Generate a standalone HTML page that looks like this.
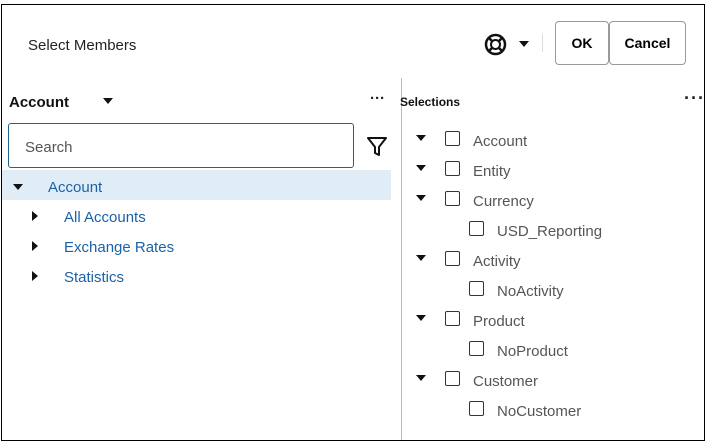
<!DOCTYPE html>
<html><head><style>
body{margin:0;width:707px;height:448px;background:#fff;font-family:"Liberation Sans",sans-serif;position:relative;overflow:hidden}
.a{position:absolute}
.frame{left:1px;top:4px;width:702px;height:435px;border:1.5px solid #000}
.t{font-size:15px;color:#222;white-space:nowrap}
.blue{color:#1a62a8}
.grey{color:#555}
.tri{width:0;height:0;border-left:5px solid transparent;border-right:5px solid transparent;border-top:6px solid #111}
.rtri{width:0;height:0;border-top:5px solid transparent;border-bottom:5px solid transparent;border-left:6px solid #111}
.cb{width:13px;height:13px;border:1.5px solid #333;border-radius:2px}
.btn{border:1px solid #999;border-radius:4px;font-weight:bold;font-size:14px;display:flex;align-items:center;justify-content:center;height:42px;top:21px}
</style></head><body>
<div class="a frame"></div>
<div class="a t" style="left:28px;top:37px;font-size:15px">Select Members</div>
<svg class="a" style="left:484px;top:33px" width="23" height="23" viewBox="0 0 23 23"><circle cx="11.5" cy="11.5" r="9.5" fill="none" stroke="#111" stroke-width="2.5"/><circle cx="11.5" cy="11.5" r="4.5" fill="none" stroke="#111" stroke-width="2"/><path d="M5 5l3.5 3.5M18 5l-3.5 3.5M5 18l3.5-3.5M18 18l-3.5-3.5" stroke="#111" stroke-width="2.5"/></svg>
<div class="a tri" style="left:519px;top:41px"></div>
<div class="a" style="left:542px;top:34px;width:1px;height:18px;background:#ddd"></div>
<div class="a btn" style="left:555px;width:52px">OK</div>
<div class="a btn" style="left:609px;width:75px">Cancel</div>
<div class="a" style="left:401px;top:78px;width:1px;height:362px;background:#bbb"></div>
<div class="a t" style="left:9px;top:94px;font-weight:bold;color:#111">Account</div>
<div class="a tri" style="left:103px;top:98px"></div>
<div class="a t" style="left:370px;top:90px;font-weight:bold">···</div>
<div class="a t" style="left:400px;top:95px;font-size:12px;font-weight:bold;color:#111">Selections</div>
<div class="a t" style="left:684px;top:88px;font-weight:bold;font-size:18px;letter-spacing:1px">···</div>
<div class="a" style="left:8px;top:123px;width:344px;height:43px;border:1.5px solid #1b6686;border-radius:3px"></div>
<div class="a t grey" style="left:25px;top:139px">Search</div>
<svg class="a" style="left:366px;top:136px" width="22" height="22" viewBox="0 0 22 22"><path d="M2 2h18l-7 9v8l-4 -2v-6z" fill="none" stroke="#111" stroke-width="2" stroke-linejoin="round"/></svg>
<div class="a" style="left:2px;top:170px;width:389px;height:30px;background:#e0edf7"></div>
<div class="a tri" style="left:13px;top:184px"></div>
<div class="a t blue" style="left:48px;top:179px">Account</div>
<div class="a rtri" style="left:32px;top:211px"></div><div class="a t blue" style="left:64px;top:209px">All Accounts</div>
<div class="a rtri" style="left:32px;top:241px"></div><div class="a t blue" style="left:64px;top:239px">Exchange Rates</div>
<div class="a rtri" style="left:32px;top:271px"></div><div class="a t blue" style="left:64px;top:269px">Statistics</div>

<div class="a tri" style="left:416px;top:135px"></div><div class="a cb" style="left:445px;top:131px"></div><div class="a t grey" style="left:473px;top:133px">Account</div>
<div class="a tri" style="left:416px;top:165px"></div><div class="a cb" style="left:445px;top:161px"></div><div class="a t grey" style="left:473px;top:163px">Entity</div>
<div class="a tri" style="left:416px;top:195px"></div><div class="a cb" style="left:445px;top:191px"></div><div class="a t grey" style="left:473px;top:193px">Currency</div>
<div class="a cb" style="left:469px;top:221px"></div><div class="a t grey" style="left:497px;top:223px">USD_Reporting</div>
<div class="a tri" style="left:416px;top:255px"></div><div class="a cb" style="left:445px;top:251px"></div><div class="a t grey" style="left:473px;top:253px">Activity</div>
<div class="a cb" style="left:469px;top:281px"></div><div class="a t grey" style="left:497px;top:283px">NoActivity</div>
<div class="a tri" style="left:416px;top:315px"></div><div class="a cb" style="left:445px;top:311px"></div><div class="a t grey" style="left:473px;top:313px">Product</div>
<div class="a cb" style="left:469px;top:341px"></div><div class="a t grey" style="left:497px;top:343px">NoProduct</div>
<div class="a tri" style="left:416px;top:375px"></div><div class="a cb" style="left:445px;top:371px"></div><div class="a t grey" style="left:473px;top:373px">Customer</div>
<div class="a cb" style="left:469px;top:401px"></div><div class="a t grey" style="left:497px;top:403px">NoCustomer</div>
</body></html>
